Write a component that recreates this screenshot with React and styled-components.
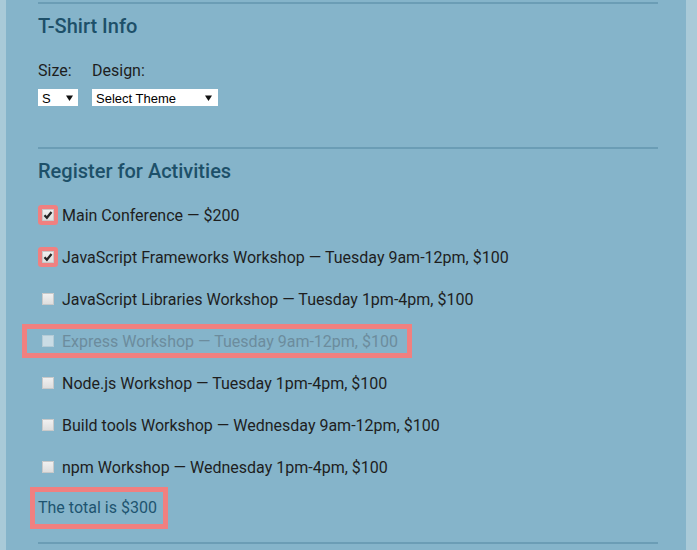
import React from "react";
import styled, { createGlobalStyle } from "styled-components";

const Global = createGlobalStyle`
  html, body { margin: 0; padding: 0; height: 100%; }
  body {
    background: #a9cad8;
    font-family: Roboto, "Noto Sans", sans-serif;
    overflow: hidden;
  }
  #root { height: 100%; }
`;

const Page = styled.div`
  display: flex;
  height: 100%;
  padding: 0 11px 0 6px;
  box-sizing: border-box;
`;

const Panel = styled.main`
  flex: 1;
  background: #85b4ca;
  padding: 2px 28px 0 32px;
  box-sizing: border-box;
`;

const Section = styled.fieldset`
  border: none;
  border-top: 2px solid #6b9db5;
  margin: 0;
  padding: 10px 0 0;
  min-width: 0;
  display: flex;
  flex-direction: column;
  align-items: flex-start;
`;

const Heading = styled.legend`
  float: left;
  width: 100%;
  padding: 0;
  margin: 0;
  font-size: 20px;
  line-height: 24px;
  font-weight: 500;
  color: #1d5069;
`;

const FieldRow = styled.div`
  display: flex;
  gap: 14px;
  margin-top: 23px;
  margin-bottom: 41px;
`;

const Field = styled.div`
  display: flex;
  flex-direction: column;
  gap: 9px;
`;

const FieldLabel = styled.label`
  font-size: 16px;
  line-height: 19px;
  color: #1e1e1e;
`;

const arrow = encodeURIComponent(
  '<svg xmlns="http://www.w3.org/2000/svg" width="7" height="6"><path d="M0 0.5H7L3.5 6Z" fill="#111"/></svg>'
);

const Select = styled.select`
  appearance: none;
  -webkit-appearance: none;
  width: ${(p) => p.$w}px;
  height: 17px;
  margin: 0;
  border: none;
  border-radius: 0;
  background: #fff url("data:image/svg+xml,${arrow}") no-repeat right ${(p) => p.$arrowRight}px center;
  font-family: "Liberation Sans", Arial, sans-serif;
  font-size: 13px;
  line-height: 17px;
  color: #000;
  padding: 1px 0 0 4px;
  outline: none;
`;

const List = styled.div`
  display: flex;
  flex-direction: column;
  align-items: flex-start;
  gap: 18px;
  margin-top: 20px;
`;

const check = encodeURIComponent(
  '<svg xmlns="http://www.w3.org/2000/svg" width="12" height="12"><path d="M2.5 6.2L4.9 8.7L9.5 3.1" fill="none" stroke="#262626" stroke-width="2.3"/></svg>'
);

const Row = styled.label`
  position: relative;
  display: inline-flex;
  align-items: center;
  gap: 8px;
  height: 24px;
  padding-left: 4px;
  font-size: 16px;
  color: ${(p) => (p.$disabled ? "#6c8c9d" : "#1e1e1e")};
  white-space: nowrap;

  ${(p) =>
    p.$flagged &&
    `
    &::after {
      content: "";
      position: absolute;
      top: -5px;
      bottom: -5px;
      left: -16px;
      right: -14px;
      border: 5px solid #f08080;
      pointer-events: none;
    }
  `}
`;

const Box = styled.input`
  appearance: none;
  -webkit-appearance: none;
  margin: 0;
  width: 12px;
  height: 12px;
  border-radius: 1px;
  background: linear-gradient(#f2f2f2, #dcdcdc);
  box-shadow: inset 0 0 0 1px #c9c9c9;
  flex: none;

  &:checked {
    background: url("data:image/svg+xml,${check}") no-repeat center,
      linear-gradient(#f2f2f2, #dcdcdc);
    box-shadow: inset 0 0 0 1px #c9c9c9, 0 0 0 4px #f08080;
  }

  &:disabled {
    background: #c9dce5;
    box-shadow: inset 0 0 0 1px #b4cbd6;
  }
`;

const Total = styled.p`
  position: relative;
  margin: 17px 0 22px;
  font-size: 16px;
  line-height: 24px;
  color: #1e5470;

  &::after {
    content: "";
    position: absolute;
    top: -9px;
    bottom: -9px;
    left: -8px;
    right: -11px;
    border: 5px solid #f08080;
    pointer-events: none;
  }
`;

const activities = [
  { label: "Main Conference — $200", checked: true },
  { label: "JavaScript Frameworks Workshop — Tuesday 9am-12pm, $100", checked: true },
  { label: "JavaScript Libraries Workshop — Tuesday 1pm-4pm, $100" },
  { label: "Express Workshop — Tuesday 9am-12pm, $100", disabled: true, flagged: true },
  { label: "Node.js Workshop — Tuesday 1pm-4pm, $100" },
  { label: "Build tools Workshop — Wednesday 9am-12pm, $100" },
  { label: "npm Workshop — Wednesday 1pm-4pm, $100" },
];

export default function App() {
  return (
    <>
      <Global />
      <Page>
        <Panel>
          <Section>
            <Heading>T-Shirt Info</Heading>
            <FieldRow>
              <Field>
                <FieldLabel htmlFor="size">Size:</FieldLabel>
                <Select id="size" $w={40} $arrowRight={5} defaultValue="S">
                  <option>S</option>
                  <option>M</option>
                  <option>L</option>
                  <option>XL</option>
                </Select>
              </Field>
              <Field>
                <FieldLabel htmlFor="design">Design:</FieldLabel>
                <Select id="design" $w={126} $arrowRight={6} defaultValue="Select Theme">
                  <option>Select Theme</option>
                  <option>Theme - JS Puns</option>
                  <option>Theme - I ♥ JS</option>
                </Select>
              </Field>
            </FieldRow>
          </Section>
          <Section>
            <Heading>Register for Activities</Heading>
            <List>
              {activities.map((a) => (
                <Row key={a.label} $disabled={a.disabled} $flagged={a.flagged}>
                  <Box type="checkbox" defaultChecked={a.checked} disabled={a.disabled} />
                  {a.label}
                </Row>
              ))}
            </List>
            <Total>The total is $300</Total>
          </Section>
          <Section />
        </Panel>
      </Page>
    </>
  );
}
